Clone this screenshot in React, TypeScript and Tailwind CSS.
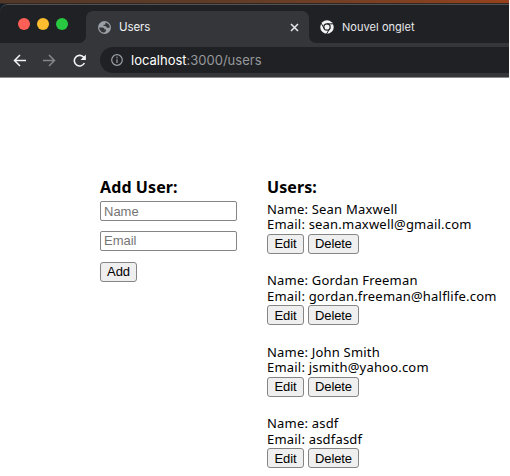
import React from "react";

const users = [
  { name: "Sean Maxwell", email: "sean.maxwell@gmail.com" },
  { name: "Gordan Freeman", email: "gordan.freeman@halflife.com" },
  { name: "John Smith", email: "jsmith@yahoo.com" },
  { name: "asdf", email: "asdfasdf" },
];

const button =
  "h-[20px] rounded-[3px] border border-[#858585] bg-[#efefef] text-center font-['Liberation_Sans',sans-serif] text-[13px] leading-[17px] tracking-[-0.1px] text-black";
const input =
  "block h-[20px] w-[137px] rounded-[2px] border border-[#858585] bg-white px-[3px] font-['Liberation_Sans',sans-serif] text-[13px] leading-[18px] placeholder:text-[#757575]";

function GlobeIcon() {
  return (
    <svg className="size-[13px] shrink-0" viewBox="0 0 26 26">
      <circle cx="13" cy="13" r="13" fill="#9aa0a6" />
      <path
        d="M2.500 13h6c3 0 4.500 1.500 4.500 4h3v2.500c0 1-1 2-2.500 2V23C7.500 23.500 2.500 19 2.500 13Z M15 3v2c0 1.500-1 2.500-2.500 2.500H11V10h3c2.500 0 3 1.500 3.500 3.500h5.800C23.800 8 20 4 15 3Z"
        fill="#35363a"
      />
    </svg>
  );
}

function ChromeIcon() {
  return (
    <svg className="size-[14px] shrink-0" viewBox="0 0 28 28">
      <circle cx="14" cy="14" r="13.5" fill="#f1f3f4" />
      <circle cx="14" cy="14" r="6.3" fill="none" stroke="#202124" strokeWidth="2.4" />
      <path d="M14 7.7h13 M8.5 17.2 2 6 M19.5 17.2 13 28" stroke="#202124" strokeWidth="2" />
    </svg>
  );
}

function BrowserChrome() {
  return (
    <header className="h-[74px] overflow-hidden bg-[#101c28] font-[Inter,sans-serif]">
      <div className="h-[74px] overflow-hidden rounded-tl-[8px] border-t border-[#505255] bg-[#202124]">
        <div className="flex h-[38px] items-end bg-[#35363a]">
          <div className="flex h-[38px] w-[86px] gap-[7px] rounded-br-[7px] bg-[#202124] pt-[13px] pl-[18px]">
            <span className="size-[12px] rounded-full bg-[#ff5f57]" />
            <span className="size-[12px] rounded-full bg-[#febc2e]" />
            <span className="size-[12px] rounded-full bg-[#28c840]" />
          </div>
          <div className="h-full w-[223px] bg-[#202124] pt-[6px]">
            <div className="flex h-[32px] items-center rounded-t-[7px] bg-[#35363a] pl-[12px] text-[11.5px] text-[#f1f3f4]">
              <GlobeIcon />
              <span className="mt-[1px] ml-[8px] flex-1 tracking-[-0.1px]">Users</span>
              <svg className="mr-[10px] size-[9px]" viewBox="0 0 9 9" stroke="#e8eaed" strokeWidth="1.5">
                <path d="m1 1 7 7M8 1 1 8" />
              </svg>
            </div>
          </div>
          <div className="flex h-full flex-1 items-center rounded-bl-[7px] bg-[#202124] pt-[6px] pl-[11px] text-[11px] text-[#e8eaed]">
            <ChromeIcon />
            <span className="mt-[1px] ml-[8px] tracking-[0.05px]">Nouvel onglet</span>
          </div>
        </div>
        <div className="flex h-[35px] items-center border-b border-[#8a8b8d] bg-[#35363a] pl-[13px]">
          <svg className="size-[13px]" viewBox="0 0 13 13" fill="none" stroke="#f1f3f4" strokeWidth="1.5">
            <path d="M13 6.5H1.5M7 1 1.5 6.5 7 12" />
          </svg>
          <svg className="ml-[17px] size-[13px]" viewBox="0 0 13 13" fill="none" stroke="#85868a" strokeWidth="1.5">
            <path d="M0 6.5h11.5M6 1l5.5 5.5L6 12" />
          </svg>
          <svg className="ml-[17px] size-[13px]" viewBox="0 0 13 13" fill="none" stroke="#f1f3f4" strokeWidth="1.6">
            <path d="M11.4 9A5.3 5.3 0 1 1 10.3 2.8L12 4.5" />
            <path d="M12.9.5v5.4H7.5Z" fill="#f1f3f4" stroke="none" />
          </svg>
          <div className="ml-[14px] flex h-[26px] flex-1 items-center rounded-l-full bg-[#202124] pl-[11px]">
            <svg className="size-[12px]" viewBox="0 0 12 12" fill="none" stroke="#9aa0a6" strokeWidth="1.2">
              <circle cx="6" cy="6" r="5.3" />
              <path d="M6 5.3V9M6 2.8v1.4" />
            </svg>
            <span className="mt-[1px] ml-[8px] text-[13px] text-[#96989b]">
              <span className="text-white">localhost</span>:3000/users
            </span>
          </div>
        </div>
      </div>
    </header>
  );
}

export default function App() {
  return (
    <div className="h-[476px] w-[510px] overflow-hidden bg-white pr-px font-['Noto_Sans',sans-serif] text-black">
      <div className="h-[4px] border-b border-[#33261f] bg-linear-to-r from-[#513829] via-[#633d27] to-[#96421c]" />
      <BrowserChrome />
      <main className="flex pt-[99px] pl-[100px]">
        <section className="w-[167px]">
          <h2 className="h-[24px] text-[16px] leading-[20px] font-bold tracking-[0.1px] whitespace-nowrap">Add User:</h2>
          <input className={input} placeholder="Name" />
          <input className={input + " mt-[9.500px]"} placeholder="Email" />
          <button className={button + " mt-[11px] block w-[37px]"}>Add</button>
        </section>
        <section className="whitespace-nowrap">
          <h2 className="h-[24.500px] text-[16px] leading-[20px] font-bold tracking-[0.1px]">Users:</h2>
          {users.map((user) => (
            <div key={user.name} className="h-[71.500px] text-[13px] leading-[15.500px] tracking-[0.2px]">
              <div>Name: {user.name}</div>
              <div>Email: {user.email}</div>
              <div className="mt-[1px] flex gap-[4px]">
                <button className={button + " w-[37px]"}>Edit</button>
                <button className={button + " w-[51px]"}>Delete</button>
              </div>
            </div>
          ))}
        </section>
      </main>
    </div>
  );
}
